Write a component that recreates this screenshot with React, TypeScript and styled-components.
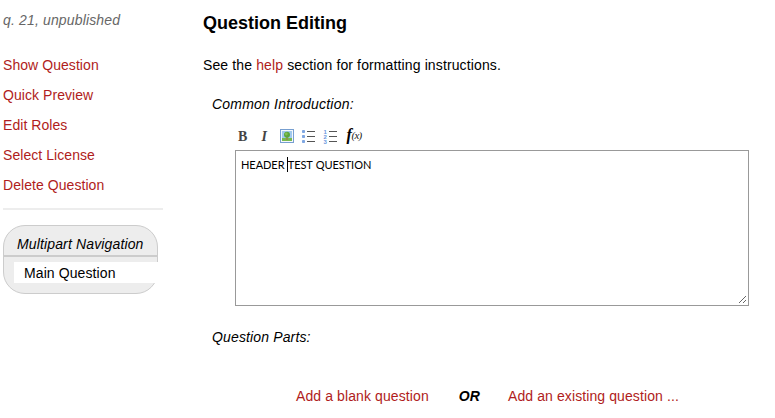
import React from 'react';
import styled, { createGlobalStyle } from 'styled-components';

const GlobalStyle = createGlobalStyle`
  body { margin: 0; background: #fff; color: #000; font: 14px/20px "Liberation Sans", Arial, sans-serif; overflow: hidden; }
  * { box-sizing: border-box; }
`;

const Page = styled.div`
  display: grid;
  grid-template-columns: 163px 546px;
  column-gap: 40px;
  height: 418px;
  letter-spacing: 0.1px;
`;
const Sidebar = styled.aside`
  padding: 10px 0 0 3px;
`;
const Status = styled.div`
  color: #666;
  font-style: italic;
  letter-spacing: 0.15px;
  margin-bottom: 20px;
`;
const Link = styled.a`
  color: #b01c20;
  text-decoration: none;
  cursor: pointer;
`;
const Menu = styled.nav`
  display: flex;
  flex-direction: column;
  line-height: 30px;
  letter-spacing: 0.06px;
`;
const Rule = styled.hr`
  height: 2px;
  margin: 8px 0 15px;
  border: 0;
  background: #ededed;
`;
const PartsCard = styled.section`
  width: 155px;
  height: 69px;
  border: 1px solid #ccc;
  border-radius: 22px;
  background: #ededed;
`;
const PartsTitle = styled.div`
  height: 31px;
  padding: 8px 0 0 13px;
  border-bottom: 2px solid #ccc;
  font-style: italic;
  letter-spacing: 0.14px;
  white-space: nowrap;
`;
const PartsItem = styled.div`
  height: 21px;
  margin: 5px -1px 0 10px;
  padding: 1px 0 0 10px;
  background: #fff;
  line-height: 21px;
`;
const Main = styled.main`
  padding-top: 12px;
`;
const Title = styled.h1`
  margin: 0 0 20px;
  font-size: 18px;
  line-height: 23px;
  letter-spacing: 0;
`;
const Intro = styled.p`
  margin: 0 0 19px;
  letter-spacing: 0.125px;
`;
const Label = styled.div<{ $spacing?: number }>`
  padding-left: 9px;
  font-style: italic;
  letter-spacing: ${(p) => p.$spacing ?? 0.14}px;
`;
const Toolbar = styled.div`
  display: flex;
  height: 36px;
  padding: 14px 0 0 33px;
`;
const ToolButton = styled.span`
  width: 22px;
  height: 16px;
  svg { display: block; overflow: visible; }
`;
const Editor = styled.div`
  display: flex;
  justify-content: space-between;
  width: 514px;
  height: 156px;
  margin: 0 0 21px 32px;
  padding: 4px 1px 1px 5px;
  border: 1px solid #999;
  font: 11px/20px Lato, sans-serif;
  letter-spacing: -0.05px;
  word-spacing: 0.4px;
`;
const Caret = styled.span`
  display: inline-block;
  width: 1px;
  height: 15px;
  margin: 0 -0.5px 0 -0.5px;
  background: #000;
  vertical-align: -3px;
`;
const Grip = styled.svg`
  align-self: flex-end;
`;
const Actions = styled.div`
  display: flex;
  padding: 39px 0 0 93px;
  white-space: nowrap;
`;
const Or = styled.em`
  margin: 0 28px 0 30px;
  font-weight: bold;
`;

const links = ['Show Question', 'Quick Preview', 'Edit Roles', 'Select License', 'Delete Question'];

function Letter({ italic, children }: { italic?: boolean; children: string }) {
  return (
    <svg width="16" height="16" letterSpacing="0">
      <text x={italic ? 3.5 : 2} y="12.5" fontFamily="Liberation Serif" fontSize="14" fontWeight="bold"
        fontStyle={italic ? 'italic' : 'normal'} fill="#444">{children}</text>
    </svg>
  );
}

function PictureIcon() {
  return (
    <svg width="16" height="16">
      <rect x="0.5" y="1.5" width="13" height="13" fill="#f4f8fc" stroke="#779fd0" />
      <path d="M2 3h10v7H2z" fill="#a1c9ed" />
      <path d="M2 10h10v3H2z" fill="#79b951" />
      <path d="M6.3 8h1.4v4H6.3z" fill="#9b8648" />
      <circle cx="7" cy="6.8" r="3" fill="#5aa63c" />
      <circle cx="6.3" cy="6" r="1.4" fill="#83bd52" />
    </svg>
  );
}

function ListIcon({ numbered }: { numbered?: boolean }) {
  return (
    <svg width="16" height="16" letterSpacing="0">
      {[3.5, 8.5, 13.5].map((y, i) => (
        <g key={y}>
          {numbered
            ? <text x="-0.5" y={y + 2} fontFamily="Liberation Sans" fontSize="6" fontWeight="bold" fill="#6a98dd">{i + 1}</text>
            : <rect x="0" y={y - 1.5} width="3" height="3" rx="0.8" fill="#7ea6e2" />}
          <path d={`M5 ${y}h8`} stroke="#555" />
        </g>
      ))}
    </svg>
  );
}

function FunctionIcon() {
  return (
    <svg width="18" height="16" fontFamily="Liberation Serif" letterSpacing="0">
      <text x="0.5" y="12" fontStyle="italic" fontSize="16" fontWeight="bold">f</text>
      <text x="5.6" y="11" fontStyle="italic" fontSize="11" letterSpacing="-0.8" fill="#222">(x)</text>
    </svg>
  );
}

export default function App() {
  return (
    <>
      <GlobalStyle />
      <Page>
        <Sidebar>
          <Status>q. 21, unpublished</Status>
          <Menu>
            {links.map((label) => <Link key={label}>{label}</Link>)}
          </Menu>
          <Rule />
          <PartsCard>
            <PartsTitle>Multipart Navigation</PartsTitle>
            <PartsItem>Main Question</PartsItem>
          </PartsCard>
        </Sidebar>
        <Main>
          <Title>Question Editing</Title>
          <Intro>See the <Link>help</Link> section for formatting instructions.</Intro>
          <Label $spacing={0.2}>Common Introduction:</Label>
          <Toolbar>
            <ToolButton><Letter>B</Letter></ToolButton>
            <ToolButton><Letter italic>I</Letter></ToolButton>
            <ToolButton><PictureIcon /></ToolButton>
            <ToolButton><ListIcon /></ToolButton>
            <ToolButton><ListIcon numbered /></ToolButton>
            <ToolButton><FunctionIcon /></ToolButton>
          </Toolbar>
          <Editor>
            <span>HEADER <Caret />TEST QUESTION</span>
            <Grip width="9" height="9">
              <path d="M1 8L8 1M5 8L8 5" stroke="#666" />
            </Grip>
          </Editor>
          <Label>Question Parts:</Label>
          <Actions>
            <Link>Add a blank question</Link>
            <Or>OR</Or>
            <Link>Add an existing question ...</Link>
          </Actions>
        </Main>
      </Page>
    </>
  );
}
